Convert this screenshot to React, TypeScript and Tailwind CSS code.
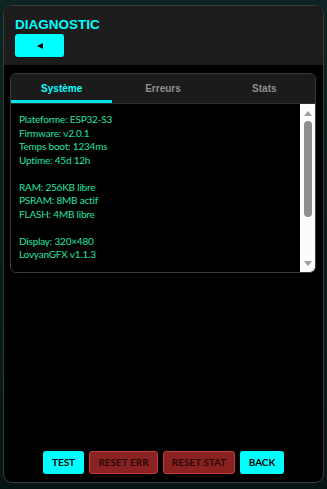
import React from "react";

const lines = [
  "Plateforme: ESP32-S3",
  "Firmware: v2.0.1",
  "Temps boot: 1234ms",
  "Uptime: 45d 12h",
  "",
  "RAM: 256KB libre",
  "PSRAM: 8MB actif",
  "FLASH: 4MB libre",
  "",
  "Display: 320×480",
  "LovyanGFX v1.1.3",
];

const tabs = ["Système", "Erreurs", "Stats"];

export default function App() {
  return (
    <div
      className="h-[489px] w-[327px] overflow-hidden bg-gradient-to-b from-[#0c2424] to-[#071414] pt-[5px] pl-[3px]"
      style={{ fontFamily: '"Liberation Sans", Arial, sans-serif' }}
    >
      <div className="flex h-[478px] w-[321px] flex-col overflow-hidden rounded-[9px] border border-[#3a3a3a] bg-black">
        {/* header */}
        <div className="flex h-[59px] flex-col bg-[#1c1c1c] pl-[11px] pt-[11px]">
          <div className="text-[13.5px] font-bold leading-[16px] text-[#00ffff]">DIAGNOSTIC</div>
          <button
            type="button"
            className="mt-[1px] flex h-[23px] w-[49px] items-center justify-center rounded-[3px] bg-[#00ffff]"
          >
            <span className="h-0 w-0 border-y-[3.5px] border-r-[6px] border-y-transparent border-r-black" />
          </button>
        </div>

        {/* body */}
        <div className="flex flex-1 flex-col px-[6px] pt-[8px] pb-[8px]">
          <div className="flex h-[200px] w-[306px] flex-col overflow-hidden rounded-[6px] border border-[#3a3a3a]">
            <div className="flex h-[30px] border-b border-[#2e2e2e] bg-[#1b1b1b]">
              {tabs.map((tab, i) => (
                <div
                  key={tab}
                  className={`flex flex-1 items-center justify-center pt-[2px] text-[10px] font-bold ${
                    i === 0 ? "border-b-[3px] border-[#00e5e5] text-[#00ffff]" : "border-b-[3px] border-transparent text-[#8f8f8f]"
                  }`}
                >
                  {tab}
                </div>
              ))}
            </div>
            <div className="flex flex-1 bg-black">
              <div
                className="flex-1 pl-[8px] pt-[9px] text-[10px] leading-[13.5px] text-[#22e3a2]"
                style={{ fontFamily: "Lato, sans-serif" }}
              >
                {lines.map((line, i) => (
                  <div key={i} className="h-[13.5px] tracking-[-0.2px]">
                    {line}
                  </div>
                ))}
              </div>
              <div className="flex w-[15px] flex-col items-center bg-[#fcfcfc] pt-[7px]">
                <div className="h-0 w-0 border-x-[4px] border-b-[5px] border-x-transparent border-b-[#a0a0a0]" />
                <div className="mt-[5px] h-[96px] w-[8px] rounded-full bg-[#8f8f8f]" />
                <div className="mt-[44px] h-0 w-0 border-x-[4px] border-t-[5px] border-x-transparent border-t-[#a0a0a0]" />
              </div>
            </div>
          </div>

          <div
            className="mt-auto flex justify-center gap-[5px] text-[10px] font-bold"
            style={{ fontFamily: "Lato, sans-serif" }}
          >
            <button type="button" className="h-[23px] w-[41px] rounded-[3px] bg-[#00ffff] text-black">TEST</button>
            <button type="button" className="h-[23px] w-[69px] rounded-[3px] border border-[#c53a3a] bg-[#8b2222] text-[#2a0808]">RESET ERR</button>
            <button type="button" className="h-[23px] w-[72px] rounded-[3px] border border-[#c53a3a] bg-[#8b2222] text-[#2a0808]">RESET STAT</button>
            <button type="button" className="h-[23px] w-[44px] rounded-[3px] bg-[#00ffff] text-black">BACK</button>
          </div>
        </div>
      </div>
    </div>
  );
}
